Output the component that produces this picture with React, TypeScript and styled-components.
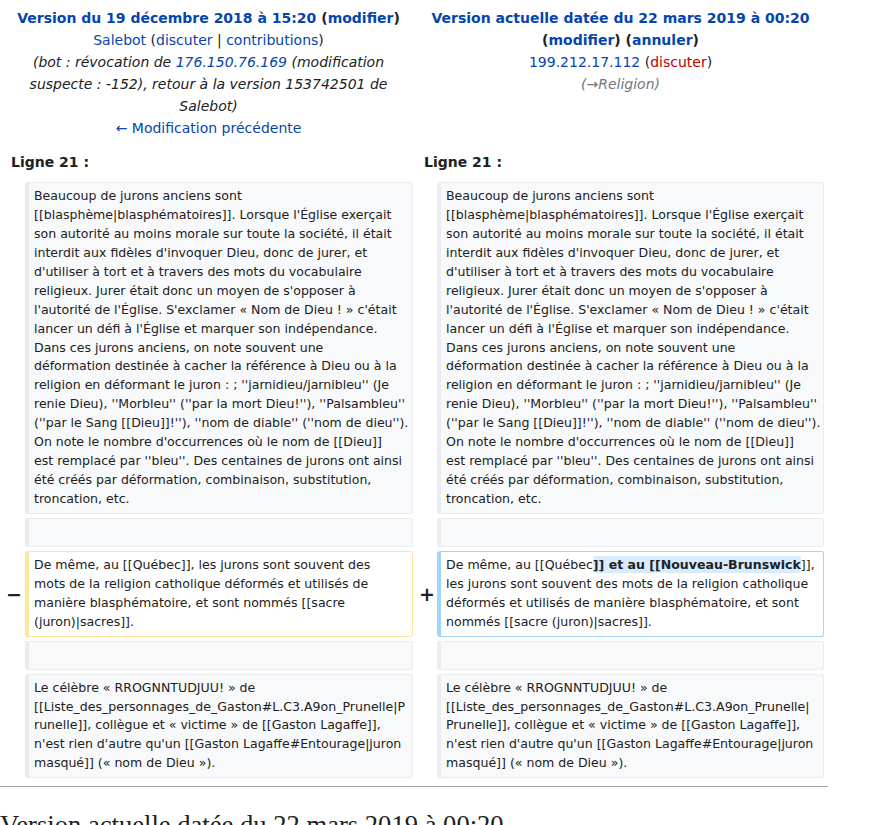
import { ReactNode } from "react";
import styled, { createGlobalStyle } from "styled-components";

const GlobalStyle = createGlobalStyle`
  body {
    margin: 0;
    background: #fff;
    color: #202122;
    font-family: "DejaVu Sans", sans-serif;
  }
`;

const Page = styled.div`
  width: 828px;
`;

const DiffTable = styled.table`
  width: 828px;
  table-layout: fixed;
  border-spacing: 4px;
  border-collapse: separate;
  font-size: 14px;
`;

const Header = styled.td`
  text-align: center;
  vertical-align: top;
  line-height: 22px;
  padding: 3px 0 4px;
  font-size: 14px;
`;

const Title = styled.div`
  font-weight: bold;
`;

const Link = styled.a<{ $red?: boolean }>`
  color: ${(p) => (p.$red ? "#ba0000" : "#0645ad")};
  text-decoration: none;
`;

const Comment = styled.div<{ $auto?: boolean }>`
  font-style: italic;
  color: ${(p) => (p.$auto ? "#72777d" : "#202122")};
`;

const LineNo = styled.td`
  font-weight: bold;
  font-size: 14px;
  line-height: 22px;
  padding: 4px 0 5px 7px;
`;

const Marker = styled.td`
  text-align: right;
  font-weight: bold;
  font-size: 19px;
  padding: 0 0 0 2px;
  vertical-align: middle;
  color: #202122;
`;

type Kind = "context" | "deleted" | "added";

const borderColor: Record<Kind, string> = {
  context: "#eaecf0",
  deleted: "#ffe49c",
  added: "#a3d3ff",
};

const Cell = styled.td<{ $kind: Kind }>`
  vertical-align: top;
  font-size: 12.55px;
  line-height: 18.94px;
  padding: 4px 6px 4px 5px;
  background: ${(p) => (p.$kind === "context" ? "#f8f9fa" : "#fff")};
  color: #202122;
  border: 1px solid ${(p) => borderColor[p.$kind]};
  border-left: 4px solid ${(p) => borderColor[p.$kind]};
  border-radius: 3px;
`;

const Line = styled.div`
  white-space: pre;
`;

const Ins = styled.ins`
  text-decoration: none;
  font-weight: bold;
  background: #d8ecff;
  border-radius: 3px;
  padding: 1px 0;
`;

const Rule = styled.div`
  height: 0;
  border-bottom: 1px solid #a2a9b1;
  margin-top: 4px;
`;

const Heading = styled.h2`
  font-family: "Liberation Serif", serif;
  font-weight: normal;
  font-size: 26.6px;
  margin: 21px 0 0;
  line-height: 1.3;
`;

const firstPara = [
  "Beaucoup de jurons anciens sont",
  "[[blasphème|blasphématoires]]. Lorsque l'Église exerçait",
  "son autorité au moins morale sur toute la société, il était",
  "interdit aux fidèles d'invoquer Dieu, donc de jurer, et",
  "d'utiliser à tort et à travers des mots du vocabulaire",
  "religieux. Jurer était donc un moyen de s'opposer à",
  "l'autorité de l'Église. S'exclamer « Nom de Dieu ! » c'était",
  "lancer un défi à l'Église et marquer son indépendance.",
  "Dans ces jurons anciens, on note souvent une",
  "déformation destinée à cacher la référence à Dieu ou à la",
  "religion en déformant le juron : ; ''jarnidieu/jarnibleu'' (Je",
  "renie Dieu), ''Morbleu'' (''par la mort Dieu!''), ''Palsambleu''",
  "(''par le Sang [[Dieu]]!''), ''nom de diable'' (''nom de dieu'').",
  "On note le nombre d'occurrences où le nom de [[Dieu]]",
  "est remplacé par ''bleu''. Des centaines de jurons ont ainsi",
  "été créés par déformation, combinaison, substitution,",
  "troncation, etc.",
];

const lastLeft = [
  "Le célèbre « RROGNNTUDJUU! » de",
  "[[Liste_des_personnages_de_Gaston#L.C3.A9on_Prunelle|P",
  "runelle]], collègue et « victime » de [[Gaston Lagaffe]],",
  "n'est rien d'autre qu'un [[Gaston Lagaffe#Entourage|juron",
  "masqué]] (« nom de Dieu »).",
];

const lastRight = [
  "Le célèbre « RROGNNTUDJUU! » de",
  "[[Liste_des_personnages_de_Gaston#L.C3.A9on_Prunelle|",
  "Prunelle]], collègue et « victime » de [[Gaston Lagaffe]],",
  "n'est rien d'autre qu'un [[Gaston Lagaffe#Entourage|juron",
  "masqué]] (« nom de Dieu »).",
];

const deleted = [
  "De même, au [[Québec]], les jurons sont souvent des",
  "mots de la religion catholique déformés et utilisés de",
  "manière blasphématoire, et sont nommés [[sacre",
  "(juron)|sacres]].",
];

const added: ReactNode[] = [
  <>
    De même, au [[Québec<Ins>]] et au [[Nouveau-Brunswick</Ins>]],
  </>,
  "les jurons sont souvent des mots de la religion catholique",
  "déformés et utilisés de manière blasphématoire, et sont",
  "nommés [[sacre (juron)|sacres]].",
];

const Text = ({ lines, kind }: { lines: ReactNode[]; kind: Kind }) => (
  <Cell $kind={kind}>
    {lines.map((l, i) => (
      <Line key={i}>{l}</Line>
    ))}
  </Cell>
);

const ContextRow = ({ left, right }: { left: ReactNode[]; right?: ReactNode[] }) => (
  <tr>
    <Marker />
    <Text kind="context" lines={left} />
    <Marker />
    <Text kind="context" lines={right ?? left} />
  </tr>
);

export default function App() {
  return (
    <Page>
      <GlobalStyle />
      <DiffTable>
        <colgroup>
          <col style={{ width: 17 }} />
          <col style={{ width: 388 }} />
          <col style={{ width: 16 }} />
          <col style={{ width: 387 }} />
        </colgroup>
        <tbody>
          <tr>
            <Header colSpan={2}>
              <Title>
                <Link href="#">Version du 19 décembre 2018 à 15:20</Link> (
                <Link href="#">modifier</Link>)
              </Title>
              <div>
                <Link href="#">Salebot</Link> (<Link href="#">discuter</Link> |{" "}
                <Link href="#">contributions</Link>)
              </div>
              <Comment>
                (bot : révocation de <Link href="#">176.150.76.169</Link>{" "}
                (modification suspecte : -152), retour à la version 153742501 de
                Salebot)
              </Comment>
              <div>
                <Link href="#">← Modification précédente</Link>
              </div>
            </Header>
            <Header colSpan={2}>
              <Title>
                <Link href="#">Version actuelle datée du 22 mars 2019 à 00:20</Link>{" "}
                (<Link href="#">modifier</Link>) (<Link href="#">annuler</Link>)
              </Title>
              <div>
                <Link href="#">199.212.17.112</Link> (
                <Link href="#" $red>
                  discuter
                </Link>
                )
              </div>
              <Comment $auto>(→Religion)</Comment>
            </Header>
          </tr>
          <tr>
            <LineNo colSpan={2}>Ligne 21 :</LineNo>
            <LineNo colSpan={2}>Ligne 21 :</LineNo>
          </tr>
          <ContextRow left={firstPara} />
          <ContextRow left={["\u00a0"]} />
          <tr>
            <Marker>−</Marker>
            <Text kind="deleted" lines={deleted} />
            <Marker>+</Marker>
            <Text kind="added" lines={added} />
          </tr>
          <ContextRow left={["\u00a0"]} />
          <ContextRow left={lastLeft} right={lastRight} />
        </tbody>
      </DiffTable>
      <Rule />
      <Heading>Version actuelle datée du 22 mars 2019 à 00:20</Heading>
    </Page>
  );
}
